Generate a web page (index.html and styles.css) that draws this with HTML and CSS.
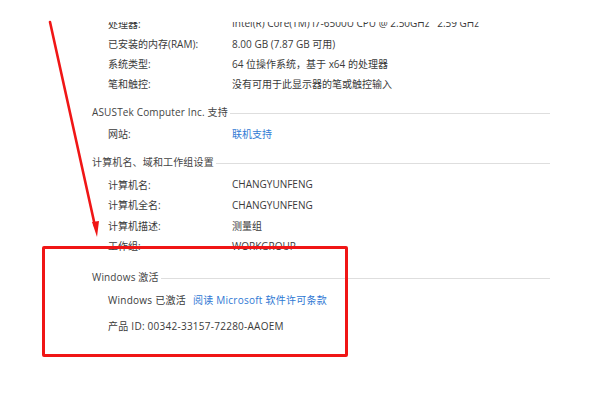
FILE: index.html
```html
<!DOCTYPE html>
<html lang="zh-CN">
<head>
<meta charset="utf-8">
<link rel="stylesheet" href="styles.css">
</head>
<body>
<div class="page">
  <div class="viewport">
    <div class="content">
      <div class="group first">
        <div class="row"><span class="label">处理器:</span><span class="value">Intel(R) Core(TM) i7-6500U CPU @ 2.50GHz &nbsp; 2.59 GHz</span></div>
        <div class="row"><span class="label">已安装的内存(RAM):</span><span class="value">8.00 GB (7.87 GB 可用)</span></div>
        <div class="row"><span class="label">系统类型:</span><span class="value">64 位操作系统，基于 x64 的处理器</span></div>
        <div class="row"><span class="label">笔和触控:</span><span class="value">没有可用于此显示器的笔或触控输入</span></div>
      </div>
      <div class="section">
        <div class="head"><span>ASUSTek Computer Inc. 支持</span><i class="rule"></i></div>
        <div class="row"><span class="label">网站:</span><span class="value link">联机支持</span></div>
      </div>
      <div class="section">
        <div class="head"><span>计算机名、域和工作组设置</span><i class="rule"></i></div>
        <div class="row tight"><span class="label">计算机名:</span><span class="value">CHANGYUNFENG</span></div>
        <div class="row tight"><span class="label">计算机全名:</span><span class="value">CHANGYUNFENG</span></div>
        <div class="row tight"><span class="label">计算机描述:</span><span class="value">测量组</span></div>
        <div class="row tight"><span class="label">工作组:</span><span class="value">WORKGROUP</span></div>
      </div>
      <div class="section activation">
        <div class="head"><span>Windows 激活</span><i class="rule"></i></div>
        <div class="line"><span>Windows 已激活</span><span class="link">阅读 Microsoft 软件许可条款</span></div>
        <div class="line pid">产品 ID: 00342-33157-72280-AAOEM</div>
      </div>
    </div>
  </div>
  <div class="highlight"></div>
  <svg class="arrow" width="591" height="410" viewBox="0 0 591 410">
    <line x1="50" y1="22" x2="95" y2="226" stroke="#f01616" stroke-width="2.6" stroke-linecap="round"/>
    <polygon points="92,222 99,221 97,237" fill="#f01616"/>
  </svg>
</div>
</body>
</html>
```

FILE: styles.css
```css
html, body {
  margin: 0;
  padding: 0;
  background: #ffffff;
}
body {
  font-family: "Open Sans", "Noto Sans CJK SC", sans-serif;
  font-size: 10px;
  color: #3a3a3a;
}
.page {
  position: relative;
  width: 591px;
  height: 410px;
  overflow: hidden;
}
.viewport {
  margin-top: 22px;
  height: 388px;
  overflow: hidden;
}
.content {
  margin-top: -9px;
  display: flex;
  flex-direction: column;
}
.group, .section {
  display: flex;
  flex-direction: column;
}
.row {
  display: flex;
  height: 20px;
  align-items: center;
  padding-left: 108px;
  white-space: nowrap;
}
.row.tight {
  height: 20.5px;
}
.label {
  width: 124px;
  flex: none;
}
.value {
  flex: none;
}
.link {
  color: #2f79d4;
}
.section {
  margin-top: 8px;
}
.section .head {
  display: flex;
  align-items: center;
  height: 20px;
  padding-left: 92px;
  width: 458px;
  margin-bottom: 2px;
  color: #444;
}
.section .head span {
  flex: none;
  white-space: nowrap;
  letter-spacing: 0.15px;
}
.rule {
  flex: 1;
  height: 1px;
  background: #dedede;
  margin-top: 4px;
  margin-left: 2px;
}
.section:nth-child(3) .head {
  margin-bottom: 3px;
}
.activation {
  margin-top: 10px;
}
.activation .head {
  margin-bottom: 3px;
}
.line {
  display: flex;
  align-items: center;
  gap: 7px;
  height: 20px;
  padding-left: 108px;
  white-space: nowrap;
  letter-spacing: 0.25px;
}
.line.pid {
  margin-top: 6px;
}
.highlight {
  position: absolute;
  left: 42px;
  top: 246px;
  width: 300px;
  height: 105px;
  border: 3px solid #f01616;
  border-radius: 2px;
}
.arrow {
  position: absolute;
  left: 0;
  top: 0;
}
```
